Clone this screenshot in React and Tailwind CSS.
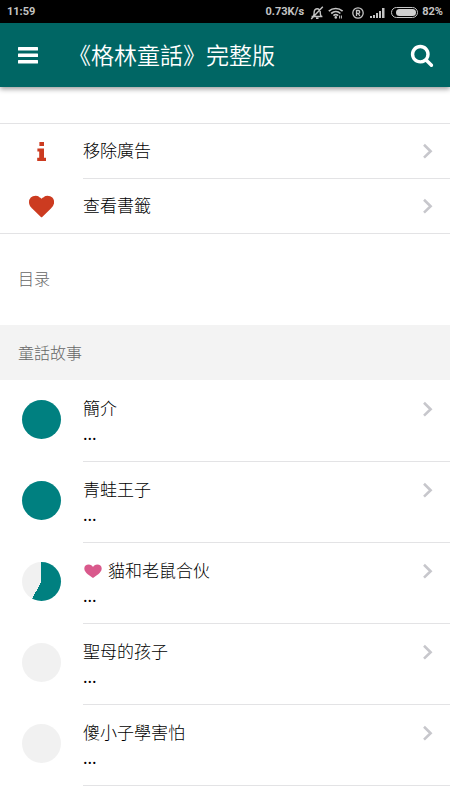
import { useState } from "react";

//color verde azulado para lo ya leído, gris para lo pendiente
const READ_COLOR = "#008080";
const UNREAD_COLOR = "#f1f1f1";

const stories = [
    { id: 1, title: "簡介", progress: 100 },
    { id: 2, title: "青蛙王子", progress: 100 },
    { id: 3, title: "貓和老鼠合伙", progress: 58, favorite: true },
    { id: 4, title: "聖母的孩子", progress: 0 },
    { id: 5, title: "傻小子學害怕", progress: 0 },
];

function HeartIcon() {
    return (
        <svg viewBox="0 0 1792 1792" className="size-[25px]" fill="currentColor" aria-hidden="true">
            <path d="M896 1664q-26 0-44-18l-624-602q-10-8-27.500-26T145 952.500 77 855 23.500 734 0 596q0-220 127-344t351-124q62 0 126.500 21.500t120 58T820 276t76 68q36-36 76-68t103.500-68.500 120-58T1322 128q224 0 351 124t127 344q0 221-229 450l-623 600q-18 18-44 18z" />
        </svg>
    );
}

//corazón más ancho que acompaña a los cuentos favoritos
function FavoriteIcon() {
    return (
        <svg viewBox="0 0 18 14" className="mr-1.5 ml-px h-3.5 w-[18px] text-[#d9598c]" fill="currentColor" aria-hidden="true">
            <path d="M9 14C6.500 11.600 0.300 9 0.300 4.400C0.300 2 2.200 0.400 4.700 0.400C6.700 0.400 8.200 1.400 9 3C9.800 1.400 11.300 0.400 13.300 0.400C15.800 0.400 17.700 2 17.700 4.400C17.700 9 11.500 11.600 9 14z" />
        </svg>
    );
}

function InfoIcon() {
    return (
        <svg viewBox="0 0 10 20" className="h-5 w-2.5" fill="currentColor" aria-hidden="true">
            <path d="M2.400 0h4.600v4h-4.600zM0.400 6.400h6.600v9.400h2v3.200H0.200v-3.200h2v-6.200H0.400z" />
        </svg>
    );
}

function Chevron() {
    return (
        <svg viewBox="0 0 12 16" className="h-4 w-3 shrink-0 text-[#c7c7cc]" fill="none" stroke="currentColor" strokeWidth="2.6" aria-hidden="true">
            <path d="M2 1.800L8.600 8.200L2 14.600" />
        </svg>
    );
}

//iconos de la barra de estado
function StatusIcons() {
    return (
        <>
            <svg viewBox="0 0 14 14" className="h-3.5 w-3.5" fill="none" stroke="currentColor" strokeWidth="1.4" aria-hidden="true">
                <path d="M1.600 10.500h10.800M3.300 10.300c1-1.300 0.700-3 0.900-4.600c0.300-2 1.500-3 3-3s2.700 1 3 3c0.200 1.600-0.100 3.300 1 4.600M6 12.300h2.500M12.800 0.800L1.200 13" />
            </svg>
            <svg viewBox="0 0 16 14" className="ml-1 h-3.5 w-4" fill="none" stroke="currentColor" strokeWidth="1.7" aria-hidden="true">
                <path d="M0.800 5.200c4-3.600 9.800-3.600 13.800 0M3.200 7.500c2.800-2.400 6.600-2.400 9.200 0M5.400 9.700c1.500-1.200 3.300-1.200 4.800 0" />
                <circle cx="7.800" cy="11.400" r="1.300" fill="currentColor" stroke="none" />
                <path d="M11.600 9.500v3M13.400 9.500v3" strokeWidth="1" />
            </svg>
            <svg viewBox="0 0 12 12" className="ml-2 size-3" fill="none" stroke="currentColor" strokeWidth="1.3" aria-hidden="true">
                <circle cx="6" cy="6" r="5.200" />
                <path d="M4.500 9V3.500h1.700a1.500 1.500 0 0 1 0 3H4.500M6.300 6.500L7.800 9" />
            </svg>
            <svg viewBox="0 0 15 11" className="ml-1.5 h-[11px] w-[15px]" fill="currentColor" aria-hidden="true">
                <path d="M0 9h2v2H0zM3 8h2v3H3zM6 6h2v5H6zM9 4h2v7H9zM12 1h2.500v10H12z" />
            </svg>
            <span className="ml-1.5 flex h-[11px] w-[27px] justify-end rounded-full border border-[#c4c4c4] p-px">
                <span className="h-full w-5 rounded-full bg-[#d0d0d0]" />
            </span>
        </>
    );
}

//círculo que se va llenando según el progreso de lectura
function ProgressPie({ value }) {
    return (
        <span
            role="img"
            aria-label={value + "%"}
            className="size-[39px] rounded-full"
            style={{ background: `conic-gradient(${READ_COLOR} ${value}%, ${UNREAD_COLOR} 0)` }}
        />
    );
}

function MenuRow({ icon, label, last }) {
    return (
        <li className={"flex " + (last ? "h-[54px]" : "h-[55px]")}>
            <span className="flex w-[83px] shrink-0 items-center justify-center text-[#cc3b20]">{icon}</span>
            <a
                href="#"
                className={
                    "flex flex-1 items-center justify-between pr-4 text-[17px] leading-6 " +
                    (last ? "" : "border-b border-[#e3e3e5]")
                }
            >
                {label}
                <Chevron />
            </a>
        </li>
    );
}

function StoryRow({ story }) {
    return (
        <li className="flex h-[81px]">
            <span className="flex w-[83px] shrink-0 justify-center pt-[19px]">
                <ProgressPie value={story.progress} />
            </span>
            <a href="#" className="flex flex-1 justify-between border-b border-[#e3e3e5] pt-4 pr-4">
                <span className="flex flex-col">
                    <span className="flex items-center text-[17px] leading-6">
                        {story.favorite && <FavoriteIcon />}
                        {story.title}
                    </span>
                    <span className="text-[17px] leading-[26px] font-normal">...</span>
                </span>
                <span className="flex h-6 items-center">
                    <Chevron />
                </span>
            </a>
        </li>
    );
}

export default function App() {
    const [menuOpen, setMenuOpen] = useState(false);

    return (
        <div className="min-h-screen bg-white font-['Noto_Sans','Noto_Sans_CJK_TC',sans-serif] font-light text-black">
            <div className="flex h-[23px] items-center bg-black px-[7px] pt-0.5 font-['Roboto',sans-serif] text-[11px] font-bold text-[#c4c4c4]">
                <span>11:59</span>
                <div className="ml-auto flex items-center">
                    <span className="mr-1.5">0.73K/s</span>
                    <StatusIcons />
                    <span className="ml-1">82%</span>
                </div>
            </div>

            <header className="flex h-16 items-center bg-[#006664] pr-4 pl-[18px] text-white shadow-[0_2px_5px_rgba(0,0,0,0.4)]">
                <button type="button" aria-label="菜單" aria-expanded={menuOpen} onClick={() => setMenuOpen(!menuOpen)}>
                    <svg viewBox="0 0 20 18" className="h-[18px] w-5" fill="currentColor" aria-hidden="true">
                        <rect y="1" width="20" height="3.500" rx="0.500" />
                        <rect y="7.500" width="20" height="3.500" rx="0.500" />
                        <rect y="14" width="20" height="3.500" rx="0.500" />
                    </svg>
                </button>
                <h1 className="ml-[30px] flex-1 text-[23px] leading-8 font-[350]">《格林童話》完整版</h1>
                <button type="button" aria-label="搜尋">
                    <svg viewBox="0 0 1792 1792" className="size-6" fill="currentColor" aria-hidden="true">
                        <path d="M1216 832q0-185-131.500-316.500T768 384 451.500 515.500 320 832t131.500 316.500T768 1280t316.500-131.500T1216 832zm512 832q0 52-38 90t-90 38q-54 0-90-38l-343-342q-179 124-399 124-143 0-273.500-55.500t-225-150-150-225T64 832t55.500-273.500 150-225 225-150T768 128t273.500 55.500 225 150 150 225T1472 832q0 220-124 399l343 343q37 37 37 90z" />
                    </svg>
                </button>
            </header>

            <main className="pt-9">
                <ul className="border-y border-[#e3e3e5]">
                    <MenuRow icon={<InfoIcon />} label="移除廣告" />
                    <MenuRow icon={<HeartIcon />} label="查看書籤" last />
                </ul>

                <h2 className="flex h-[91px] items-center px-[18px] pb-0.5 text-[16px] text-[#666666]">目录</h2>

                <h3 className="flex h-[55px] items-center bg-[#f3f3f3] px-[18px] text-[16px] text-[#666666]">童話故事</h3>
                <ul className="pt-px">
                    {stories.map((story) => (
                        <StoryRow key={story.id} story={story} />
                    ))}
                </ul>
            </main>
        </div>
    );
}
